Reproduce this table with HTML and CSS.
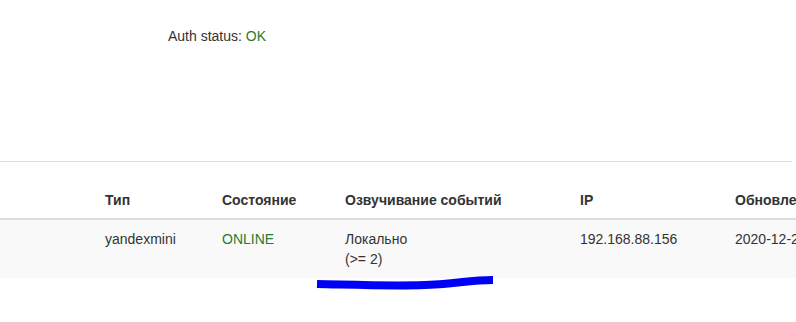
FILE: index.html
```html
<!DOCTYPE html>
<html lang="en">
<head>
  <meta charset="UTF-8" />
  <title>Устройства</title>
  <link rel="stylesheet" href="styles.css">
</head>
<body>
  <div class="auth">Auth status: <span class="ok">OK</span></div>

  <div class="divider"></div>

  <div class="devices">
    <div class="table-wrap">
      <table class="table">
        <thead>
          <tr>
            <th class="col-name"></th>
            <th class="col-type">Тип</th>
            <th class="col-state">Состояние</th>
            <th class="col-voice">Озвучивание событий</th>
            <th class="col-ip">IP</th>
            <th class="col-upd">Обновлено</th>
          </tr>
        </thead>
        <tbody>
          <tr>
            <td></td>
            <td>yandexmini</td>
            <td class="ok">ONLINE</td>
            <td>Локально<br>(&gt;= 2)</td>
            <td>192.168.88.156</td>
            <td>2020-12-22 14:05:11</td>
          </tr>
        </tbody>
      </table>
    </div>

    <!-- marker underline -->
    <svg class="marker" width="200" height="20" viewBox="0 0 200 20">
      <path d="M4 8 C 50 9, 100 11, 130 8 S 165 4, 180 4" fill="none" stroke="#0000f6" stroke-width="8" stroke-linecap="butt"/>
    </svg>
  </div>
</body>
</html>
```

FILE: styles.css
```css
body {
  margin: 0;
  font-family: "Liberation Sans", Arial, sans-serif;
  font-size: 14px;
  line-height: 20px;
  color: #333;
  background: #fff;
}

.auth {
  padding: 26px 0 0 168px;
  height: 135px;
}

.ok {
  color: #2b7a2f;
}

.divider {
  width: 792px;
  border-top: 1px solid #ddd;
}

.devices {
  position: relative;
  margin-top: 20px;
  height: 140px;
}

.table-wrap {
  width: 796px;
  overflow: hidden;
}

.table {
  border-collapse: collapse;
  border-spacing: 0;
  width: 1000px;
  table-layout: fixed;
}

.table th,
.table td {
  padding: 8px;
  text-align: left;
  vertical-align: top;
  white-space: nowrap;
}

.table th {
  font-weight: bold;
  border-bottom: 2px solid #ddd;
}

.table tbody tr {
  background: #f9f9f9;
}

.table td {
  height: 40px;
  padding-top: 9px;
  padding-bottom: 9px;
}

.col-name { width: 81px; }
.col-type { width: 101px; }
.col-state { width: 107px; }
.col-voice { width: 219px; }
.col-ip { width: 139px; }

.marker {
  position: absolute;
  left: 313px;
  top: 94px;
}
```
